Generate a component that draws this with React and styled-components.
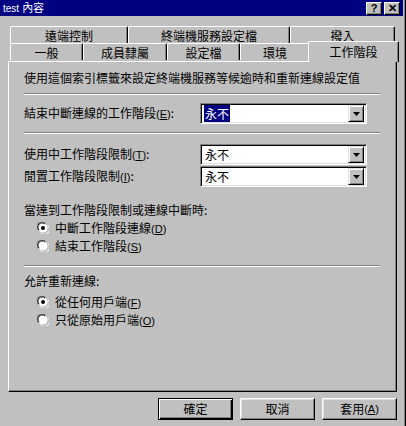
import React from 'react';
import styled, {createGlobalStyle} from 'styled-components';

const Global = createGlobalStyle`
    html, body {
        margin: 0;
        padding: 0;
        background: #c0c0c0;
    }
    * {
        box-sizing: border-box;
    }
`;

const FONT = `"Noto Sans CJK TC", "Liberation Sans", sans-serif`;

const Window = styled.div`
    width: 406px;
    height: 426px;
    background: #c0c0c0;
    border-right: 1px solid #000;
    box-shadow: inset -1px 0 #808080;
    font-family: ${FONT};
    font-size: 12px;
    color: #000;
    display: flex;
    flex-direction: column;
    overflow: hidden;
`;

const TitleBar = styled.div`
    height: 16px;
    margin-right: 2px;
    background: #000080;
    color: #fff;
    display: flex;
    align-items: center;
    padding: 0 3px 0 3px;
`;

const TitleText = styled.div`
    flex: auto;
    font-size: 11px;
    line-height: 16px;
    white-space: nowrap;
    small {
        font-size: 10px;
        font-family: "Liberation Sans", sans-serif;
        margin-right: 3px;
    }
`;

const CaptionButton = styled.div`
    width: 16px;
    height: 13px;
    margin-left: 2px;
    background: #c0c0c0;
    border-top: 1px solid #fff;
    border-left: 1px solid #fff;
    border-right: 1px solid #000;
    border-bottom: 1px solid #000;
    box-shadow: inset -1px -1px #808080;
    color: #000;
    font-family: "Liberation Sans", sans-serif;
    font-weight: bold;
    font-size: 11px;
    line-height: 11px;
    display: flex;
    align-items: center;
    justify-content: center;
`;

const TabArea = styled.div`
    margin-top: 10px;
    display: flex;
    flex-direction: column;
`;

const TabRow = styled.div`
    display: flex;
    align-items: flex-start;
    height: ${p => p.$h}px;
    padding-left: 10px;
`;

const Tab = styled.div`
    width: ${p => p.$w}px;
    height: ${p => p.$selected ? 21 : 17}px;
    margin: ${p => p.$selected ? '-2px -2px 0 -2px' : '0'};
    position: relative;
    z-index: ${p => p.$selected ? 2 : 1};
    background: #c0c0c0;
    border-top: 1px solid #fff;
    border-left: 1px solid #fff;
    border-right: 1px solid #000;
    border-top-left-radius: 2px;
    border-top-right-radius: 2px;
    box-shadow: inset -1px 0 #808080;
    display: flex;
    justify-content: center;
    padding-top: ${p => p.$selected ? 2 : 1}px;
    line-height: 15px;
    white-space: nowrap;
`;

const Panel = styled.div`
    margin-left: 8px;
    width: 389px;
    height: 331px;
    border-top: 1px solid #fff;
    border-left: 1px solid #fff;
    border-right: 1px solid #000;
    border-bottom: 1px solid #000;
    box-shadow: inset -1px -1px #808080;
    padding: 8px 16px 0 15px;
    display: flex;
    flex-direction: column;
`;

const Text = styled.div`
    line-height: 16px;
    height: 16px;
    margin-top: ${p => p.$mt || 0}px;
    white-space: nowrap;
`;

const Separator = styled.div`
    height: 2px;
    width: 356px;
    border-top: 1px solid #808080;
    border-bottom: 1px solid #fff;
    margin-top: ${p => p.$mt || 0}px;
`;

const FieldRow = styled.div`
    display: flex;
    align-items: center;
    height: 21px;
    margin-top: ${p => p.$mt || 0}px;
`;

const FieldLabel = styled.div`
    width: 176px;
    white-space: nowrap;
    line-height: 16px;
`;

const Combo = styled.div`
    width: 167px;
    height: 21px;
    background: #fff;
    border-top: 1px solid #808080;
    border-left: 1px solid #808080;
    border-right: 1px solid #fff;
    border-bottom: 1px solid #fff;
    box-shadow: inset 1px 1px #000, inset -1px -1px #dfdfdf;
    padding: 2px 2px 2px 3px;
    display: flex;
    align-items: center;
`;

const ComboValue = styled.div`
    flex: auto;
    line-height: 14px;
    span {
        padding: 0 1px;
        background: ${p => p.$focus ? '#000080' : 'transparent'};
        color: ${p => p.$focus ? '#fff' : '#000'};
    }
`;

const DropButton = styled.div`
    width: 16px;
    height: 17px;
    background: #c0c0c0;
    border-top: 1px solid #dfdfdf;
    border-left: 1px solid #dfdfdf;
    border-right: 1px solid #000;
    border-bottom: 1px solid #000;
    box-shadow: inset 1px 1px #fff, inset -1px -1px #808080;
    display: flex;
    align-items: center;
    justify-content: center;
`;

const RadioRow = styled.div`
    display: flex;
    align-items: center;
    height: 18px;
    padding-left: 13px;
    margin-top: ${p => p.$mt || 0}px;
    gap: 6px;
    line-height: 16px;
`;

const RadioLabel = styled.span`
    white-space: nowrap;
`;

const KeyHint = styled.span`
    font-family: "Liberation Sans", sans-serif;
    font-size: 11px;
`;

const ButtonBar = styled.div`
    display: flex;
    justify-content: flex-end;
    gap: 7px;
    padding: 6px 8px 0 0;
`;

const Button = styled.div`
    width: 75px;
    height: 22px;
    background: #c0c0c0;
    border: 1px solid ${p => p.$default ? '#000' : '#fff'};
    border-right-color: #000;
    border-bottom-color: #000;
    box-shadow: ${p => p.$default
        ? 'inset 1px 1px #fff, inset -1px -1px #000, inset -2px -2px #808080'
        : 'inset -1px -1px #808080, inset 1px 1px #dfdfdf'};
    display: flex;
    align-items: center;
    justify-content: center;
    line-height: 16px;
    white-space: nowrap;
`;

const Key = ({k}) => <KeyHint>(<u>{k}</u>)</KeyHint>;

const Arrow = () => (
    <svg width="7" height="4" viewBox="0 0 7 4">
        <path d="M0 0h7L3.5 4z" fill="#000" />
    </svg>
);

const Radio = ({checked}) => (
    <svg width="12" height="12" viewBox="0 0 12 12">
        <path d="M1 8.5A5 5 0 0 1 8.5 1" stroke="#808080" fill="none" />
        <circle cx="6" cy="6" r="4.5" fill="#fff" />
        <path d="M2 8A4 4 0 0 1 8 2" stroke="#000" fill="none" />
        <path d="M3.5 11A5 5 0 0 0 11 3.5" stroke="#fff" fill="none" />
        {checked && <circle cx="6" cy="6" r="2" fill="#000" />}
    </svg>
);

const backTabs = [
    {label: '遠端控制', w: 118},
    {label: '終端機服務設定檔', w: 162},
    {label: '撥入', w: 105},
];

const frontTabs = [
    {label: '一般', w: 73},
    {label: '成員隸屬', w: 84},
    {label: '設定檔', w: 73},
    {label: '環境', w: 70},
    {label: '工作階段', w: 91, selected: true},
];

const ComboField = ({label, value, focus, mt}) => (
    <FieldRow $mt={mt}>
        <FieldLabel>{label}</FieldLabel>
        <Combo>
            <ComboValue $focus={focus}><span>{value}</span></ComboValue>
            <DropButton><Arrow /></DropButton>
        </Combo>
    </FieldRow>
);

const RadioOption = ({checked, label, k, mt}) => (
    <RadioRow $mt={mt}>
        <Radio checked={checked} />
        <RadioLabel>{label}<Key k={k} /></RadioLabel>
    </RadioRow>
);

const App = () => {
    return <Window>
        <Global />
        <TitleBar>
            <TitleText><small>test</small>內容</TitleText>
            <CaptionButton>?</CaptionButton>
            <CaptionButton>✕</CaptionButton>
        </TitleBar>
        <TabArea>
            <TabRow $h={17}>
                {backTabs.map(t => <Tab key={t.label} $w={t.w}>{t.label}</Tab>)}
            </TabRow>
            <TabRow $h={18}>
                {frontTabs.map(t => <Tab key={t.label} $w={t.w} $selected={t.selected}>{t.label}</Tab>)}
            </TabRow>
        </TabArea>
        <Panel>
            <Text>使用這個索引標籤來設定終端機服務等候逾時和重新連線設定值</Text>
            <Separator $mt={7} />
            <ComboField label={<>結束中斷連線的工作階段<Key k="E" />:</>} value="永不" focus mt={8} />
            <Separator $mt={8} />
            <ComboField label={<>使用中工作階段限制<Key k="T" />:</>} value="永不" mt={10} />
            <ComboField label={<>閒置工作階段限制<Key k="I" />:</>} value="永不" mt={1} />
            <Text $mt={15}>當達到工作階段限制或連線中斷時:</Text>
            <RadioOption checked label="中斷工作階段連線" k="D" mt={1} />
            <RadioOption label="結束工作階段" k="S" />
            <Separator $mt={10} />
            <Text $mt={6}>允許重新連線:</Text>
            <RadioOption checked label="從任何用戶端" k="F" mt={4} />
            <RadioOption label="只從原始用戶端" k="O" />
        </Panel>
        <ButtonBar>
            <Button $default>確定</Button>
            <Button>取消</Button>
            <Button>套用<Key k="A" /></Button>
        </ButtonBar>
    </Window>
};

export default App;
